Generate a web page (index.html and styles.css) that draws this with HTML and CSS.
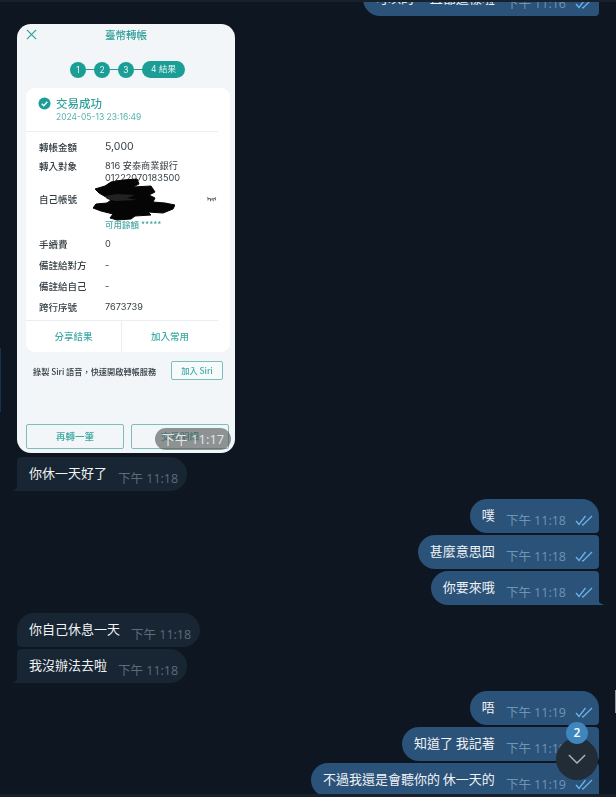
FILE: index.html
```html
<!DOCTYPE html>
<html lang="en">
<head>
    <meta charset="UTF-8">
    <meta name="viewport" content="width=device-width, initial-scale=1.0">
    <title>Chat</title>
    <link rel="stylesheet" href="styles.css">
</head>
<body>
    <div class="chat">
        <div class="msg out first">
            <span class="text">可以的 一直都這樣啦</span>
            <span class="time">下午 11:16</span>
            <svg class="check" viewBox="0 0 18 12"><path d="M1 7l3 3.500L10.500 2M7 10.500l1 .5L17 2"/></svg>
        </div>

        <div class="photo">
            <div class="screen">
                <div class="screen-head">
                    <svg class="close" viewBox="0 0 12 12"><path d="M1 1l10 10M11 1L1 11"/></svg>
                    <span>臺幣轉帳</span>
                </div>
                <div class="steps">
                    <span class="step">1</span><span class="step-line"></span>
                    <span class="step">2</span><span class="step-line"></span>
                    <span class="step">3</span><span class="step-line"></span>
                    <span class="step step-now">4 結果</span>
                </div>
                <div class="panel">
                    <div class="result">
                        <div class="result-title">
                            <svg class="ok" viewBox="0 0 14 14"><circle cx="7" cy="7" r="6.500"/><path d="M4 7.200l2.200 2.200L10 5.200"/></svg>
                            <span>交易成功</span>
                        </div>
                        <div class="result-date">2024-05-13 23:16:49</div>
                    </div>
                    <div class="details">
                        <div class="row row-amount"><span>轉帳金額</span><b>5,000</b></div>
                        <div class="row row-target"><span>轉入對象</span><b>816 安泰商業銀行<br>01222070183500</b></div>
                        <div class="row row-own">
                            <span>自己帳號</span>
                            <div class="balance">可用餘額 *****</div>
                            <svg class="eye" viewBox="0 0 12 6"><path d="M1 1.500c3 2 7 2 10 0M2.500 2.500L2 4.500M5 3.200V5.500M7.500 3.200L8 5.500M10 2.500l.5 2"/></svg>
                        </div>
                        <div class="row"><span>手續費</span><b>0</b></div>
                        <div class="row"><span>備註給對方</span><b>-</b></div>
                        <div class="row"><span>備註給自己</span><b>-</b></div>
                        <div class="row"><span>跨行序號</span><b>7673739</b></div>
                    </div>
                    <div class="panel-actions">
                        <span>分享結果</span>
                        <span>加入常用</span>
                    </div>
                </div>
                <div class="siri">
                    <span>錄製 Siri 語音，快速開啟轉帳服務</span>
                    <span class="siri-btn">加入 Siri</span>
                </div>
                <div class="screen-actions">
                    <span>再轉一筆</span>
                    <span>交易明細</span>
                </div>
            </div>
            <!-- scribbled out by hand on the photo -->
            <svg class="scribble" viewBox="0 0 82 44">
                <path d="M18 4L30 2 44 1 46 6 40 9 58 8 62 14 56 17 62 20 60 24 72 25 82 27 80 31 70 35 55 34 58 37 42 38 38 41 24 42 17 40 20 36 8 33 0 30 3 26 14 25 18 22 6 15 2 11 12 8z"/>
                <path class="scribble-thin" d="M12 18L24 16 42 17 34 20 44 22 22 23 14 21z"/>
            </svg>
            <span class="photo-time">下午 11:17</span>
        </div>

        <div class="msg in tail">
            <span class="text">你休一天好了</span>
            <span class="time">下午 11:18</span>
        </div>

        <div class="group">
            <div class="msg out top">
                <span class="text">噗</span>
                <span class="time">下午 11:18</span>
                <svg class="check" viewBox="0 0 18 12"><path d="M1 7l3 3.500L10.500 2M7 10.500l1 .5L17 2"/></svg>
            </div>
            <div class="msg out mid">
                <span class="text">甚麼意思囧</span>
                <span class="time">下午 11:18</span>
                <svg class="check" viewBox="0 0 18 12"><path d="M1 7l3 3.500L10.500 2M7 10.500l1 .5L17 2"/></svg>
            </div>
            <div class="msg out tail">
                <span class="text">你要來哦</span>
                <span class="time">下午 11:18</span>
                <svg class="check" viewBox="0 0 18 12"><path d="M1 7l3 3.500L10.500 2M7 10.500l1 .5L17 2"/></svg>
            </div>
        </div>

        <div class="group">
            <div class="msg in top">
                <span class="text">你自己休息一天</span>
                <span class="time">下午 11:18</span>
            </div>
            <div class="msg in tail">
                <span class="text">我沒辦法去啦</span>
                <span class="time">下午 11:18</span>
            </div>
        </div>

        <div class="group">
            <div class="msg out top">
                <span class="text">唔</span>
                <span class="time">下午 11:19</span>
                <svg class="check" viewBox="0 0 18 12"><path d="M1 7l3 3.500L10.500 2M7 10.500l1 .5L17 2"/></svg>
            </div>
            <div class="msg out mid">
                <span class="text">知道了 我記著</span>
                <span class="time">下午 11:19</span>
                <svg class="check" viewBox="0 0 18 12"><path d="M1 7l3 3.500L10.500 2M7 10.500l1 .5L17 2"/></svg>
            </div>
            <div class="msg out tail">
                <span class="text">不過我還是會聽你的 休一天的</span>
                <span class="time">下午 11:19</span>
                <svg class="check" viewBox="0 0 18 12"><path d="M1 7l3 3.500L10.500 2M7 10.500l1 .5L17 2"/></svg>
            </div>
        </div>
    </div>

    <div class="scroll-down">
        <svg viewBox="0 0 20 12"><path d="M1 1l9 9 9-9"/></svg>
        <span class="badge">2</span>
    </div>

    <!-- window edges that show at the rim of the capture -->
    <div class="edge edge-top"></div>
    <div class="edge edge-bottom"></div>
    <div class="edge edge-left"></div>
    <div class="edge edge-right"></div>
</body>
</html>
```

FILE: styles.css
```css
html, body {
    margin: 0;
    height: 797px;
    overflow: hidden;
}
body {
    position: relative;
    background-color: #0e1621;
    color: #f0f3f6;
    font-family: "Open Sans", "Noto Sans CJK TC", sans-serif;
}
.chat {
    display: flex;
    flex-direction: column;
    padding: 0 17px;
}
.group {
    display: flex;
    flex-direction: column;
    gap: 2px;
    margin-top: 8px;
}

/* message bubbles */
.msg {
    position: relative;
    display: flex;
    align-items: flex-end;
    box-sizing: border-box;
    height: 34px;
    padding: 0 6px 3px 12px;
    border-radius: 17px;
    width: fit-content;
    font-size: 13px;
}
.msg .text {
    align-self: flex-start;
    margin-top: 7px;
    line-height: 18px;
    font-family: "Noto Sans CJK TC", sans-serif;
}
.msg .time {
    margin-left: 11px;
    font-size: 12.500px;
    line-height: 18px;
    white-space: nowrap;
    font-family: "Open Sans", "Noto Sans CJK TC", sans-serif;
}
.msg.in {
    background: #182533;
    padding-right: 9px;
}
.msg.in .time {
    color: #5d6c7b;
}
.msg.out {
    align-self: flex-end;
    background: #2b5278;
}
.msg.out .time {
    color: #6e94b8;
}
.msg.first {
    margin-top: -18px;
    border-bottom-right-radius: 4px;
}
.msg.out.top {
    border-bottom-right-radius: 4px;
}
.msg.out.mid {
    border-radius: 17px 4px 4px 17px;
}
.msg.out.tail {
    border-top-right-radius: 4px;
    border-bottom-right-radius: 0;
}
.msg.in.top {
    border-bottom-left-radius: 4px;
}
.msg.in.tail {
    border-top-left-radius: 4px;
    border-bottom-left-radius: 0;
}
.msg.tail::after {
    content: "";
    position: absolute;
    bottom: 0;
    width: 6px;
    height: 8px;
}
.msg.out.tail::after {
    right: -6px;
    background: radial-gradient(circle at 100% 0, transparent 7.500px, #2b5278 8px);
}
.msg.in.tail::after {
    left: -6px;
    background: radial-gradient(circle at 0 0, transparent 7.500px, #182533 8px);
}
.check {
    width: 18px;
    height: 12px;
    margin: 0 0 4px 9px;
    fill: none;
    stroke: #6db3ea;
    stroke-width: 1.300;
}

/* the bank app screenshot sent as a photo */
.photo {
    position: relative;
    width: 218px;
    height: 429px;
    margin-top: 8px;
    margin-bottom: 4px;
    border-radius: 14px;
    overflow: hidden;
}
.screen {
    display: flex;
    flex-direction: column;
    height: 100%;
    box-sizing: border-box;
    padding: 0 5px 4px 9px;
    background: #f2f6f8;
    filter: blur(0.35px);
    font-family: "Noto Sans CJK TC", sans-serif;
    font-size: 9.500px;
    color: #333c42;
}
.screen-head {
    position: relative;
    display: flex;
    justify-content: center;
    padding-right: 4px;
    height: 22px;
    line-height: 22px;
    font-size: 10.500px;
    font-weight: 500;
    color: #2f9f98;
}
.close {
    position: absolute;
    left: 0;
    top: 5px;
    width: 11px;
    height: 11px;
    fill: none;
    stroke: #2f9f98;
    stroke-width: 1.300;
}
.steps {
    display: flex;
    align-items: center;
    justify-content: flex-start;
    margin: 15px 0 10px 44px;
    height: 17px;
}
.step {
    width: 16px;
    height: 16px;
    border-radius: 50%;
    background: #1a9e96;
    color: #e8f6f5;
    font-family: Inter, "Noto Sans CJK TC", sans-serif;
    font-size: 8.500px;
    line-height: 16px;
    text-align: center;
}
.step-line {
    width: 8px;
    height: 1.500px;
    background: #1a9e96;
}
.step-now {
    width: 43px;
    height: 17px;
    line-height: 17px;
    border-radius: 9px;
}
.panel {
    display: flex;
    flex-direction: column;
    height: 264px;
    background: #fff;
    border-radius: 9px;
}
.result {
    height: 44px;
    box-sizing: border-box;
    padding: 7px 0 0 12px;
    margin-right: 12px;
    border-bottom: 1px solid #e9eef0;
}
.result-title {
    display: flex;
    align-items: center;
    gap: 5px;
    height: 16px;
    font-size: 11.500px;
    font-weight: 500;
    color: #2f9f98;
}
.ok {
    width: 13px;
    height: 13px;
}
.ok circle {
    fill: #1a9e96;
}
.ok path {
    fill: none;
    stroke: #fff;
    stroke-width: 1.500;
}
.result-date {
    margin-left: 18px;
    font-family: Inter, sans-serif;
    font-size: 8.500px;
    line-height: 12px;
    color: #5ab3ad;
}
.details {
    flex: 1;
    display: flex;
    flex-direction: column;
    padding: 5px 12px 0 13px;
}
.row {
    position: relative;
    display: grid;
    grid-template-columns: 66px 1fr;
    align-items: center;
    height: 21px;
    line-height: 12px;
}
.row span {
    font-weight: 500;
    font-size: 9.500px;
}
.row b {
    font-weight: 400;
    font-family: Inter, "Noto Sans CJK TC", sans-serif;
    font-size: 9.200px;
}
.row-amount {
    height: 20px;
}
.row-amount b {
    font-size: 10.500px;
}
.row-target {
    box-sizing: border-box;
    align-items: start;
    height: 27px;
    padding-top: 3px;
}
.row-own {
    box-sizing: border-box;
    height: 49.500px;
    align-items: start;
    padding-top: 9px;
}
.balance {
    align-self: end;
    margin-bottom: 4px;
    height: 12px;
    font-size: 8.500px;
    font-weight: 500;
    color: #4aa9a3;
}
.eye {
    position: absolute;
    right: 1px;
    top: 12px;
    width: 11px;
    height: 6px;
    fill: none;
    stroke: #30383e;
    stroke-width: 0.900;
}
.panel-actions {
    display: grid;
    grid-template-columns: 95px 1fr;
    height: 31px;
    margin-right: 12px;
    border-top: 1px solid #e9eef0;
    line-height: 30px;
    text-align: center;
    font-weight: 500;
    color: #3fa9a3;
}
.panel-actions span + span {
    border-left: 1px solid #e9eef0;
}
.siri {
    display: flex;
    align-items: center;
    justify-content: space-between;
    height: 19px;
    margin: 9px 7px 0 7px;
    font-size: 8.200px;
    font-weight: 500;
}
.siri-btn {
    width: 52px;
    height: 19px;
    box-sizing: border-box;
    border: 1px solid #7cbfba;
    border-radius: 2px;
    background: #f6fafb;
    color: #3fa9a3;
    text-align: center;
    line-height: 17px;
}
.screen-actions {
    display: grid;
    grid-template-columns: 98px 98px;
    gap: 7px;
    margin-top: auto;
}
.screen-actions span {
    height: 25px;
    box-sizing: border-box;
    border: 1px solid #7cbfba;
    border-radius: 2px;
    text-align: center;
    line-height: 23px;
    font-weight: 500;
    color: #3fa9a3;
}
.scribble {
    position: absolute;
    left: 76px;
    top: 154px;
    width: 82px;
    height: 44px;
    fill: #050505;
    stroke: #050505;
    stroke-width: 1;
    stroke-linejoin: round;
    filter: blur(0.6px);
}
.scribble .scribble-thin {
    fill: #222;
    stroke: none;
}
.photo-time {
    position: absolute;
    right: 4px;
    bottom: 3px;
    width: 76px;
    height: 22px;
    border-radius: 11px;
    background: rgba(80, 84, 84, 0.62);
    color: #e4e6e6;
    font-size: 13px;
    line-height: 23px;
    text-align: center;
}

/* jump to bottom button */
.scroll-down {
    position: absolute;
    left: 556px;
    top: 738px;
    display: flex;
    align-items: center;
    justify-content: center;
    width: 42px;
    height: 42px;
    border-radius: 50%;
    background: #222c36;
}
.scroll-down svg {
    width: 18px;
    height: 11px;
    fill: none;
    stroke: #a9b3bc;
    stroke-width: 1.600;
}
.badge {
    position: absolute;
    left: 10px;
    top: -16px;
    width: 22px;
    height: 22px;
    border-radius: 50%;
    background: #3e86bd;
    color: #fff;
    font-size: 12px;
    font-weight: 600;
    line-height: 22px;
    text-align: center;
}

.edge {
    position: absolute;
}
.edge-top {
    top: 0;
    left: 0;
    right: 0;
    height: 2px;
    background: #17202b;
}
.edge-bottom {
    bottom: 0;
    left: 0;
    right: 0;
    height: 3px;
    background: #17202b;
}
.edge-left {
    left: 0;
    top: 348px;
    width: 1px;
    height: 64px;
    background: #17324f;
}
.edge-right {
    right: 0;
    top: 690px;
    width: 1px;
    height: 23px;
    background: #8a9198;
}
```
